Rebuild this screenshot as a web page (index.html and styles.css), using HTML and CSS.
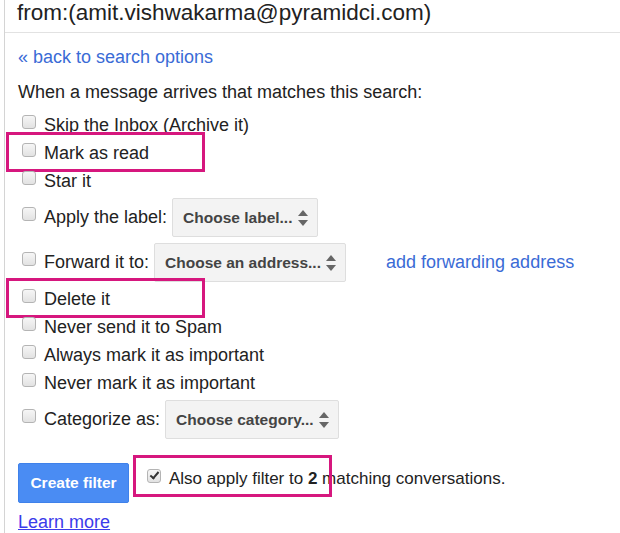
FILE: index.html
```html
<!DOCTYPE html>
<html lang="en">
<head>
    <meta charset="UTF-8">
    <title>Create filter</title>
    <link rel="stylesheet" href="styles.css">
</head>
<body>
<div class="panel">
    <div class="query">from:(amit.vishwakarma@pyramidci.com)</div>
    <div class="form">
        <a class="back" href="#">&laquo; back to search options</a>
        <p class="intro">When a message arrives that matches this search:</p>

        <label class="row"><span class="box"></span>Skip the Inbox (Archive it)</label>
        <label class="row marked"><span class="box"></span>Mark as read</label>
        <label class="row"><span class="box"></span>Star it</label>
        <label class="row tall"><span class="box"></span>Apply the label:
            <span class="picker label-picker">Choose label...<span class="arrows"></span></span>
        </label>
        <div class="row tall fwd-row"><span class="box"></span>Forward it to:
            <span class="picker addr-picker">Choose an address...<span class="arrows"></span></span>
            <a class="fwd" href="#">add forwarding address</a>
        </div>
        <label class="row marked"><span class="box"></span>Delete it</label>
        <label class="row"><span class="box"></span>Never send it to Spam</label>
        <label class="row"><span class="box"></span>Always mark it as important</label>
        <label class="row"><span class="box"></span>Never mark it as important</label>
        <label class="row tall"><span class="box"></span>Categorize as:
            <span class="picker cat-picker">Choose category...<span class="arrows"></span></span>
        </label>

        <div class="actions">
            <button class="create">Create filter</button>
            <label class="also"><span class="box checked"></span><span>Also apply filter to <b>2</b> matching conversations.</span></label>
        </div>
        <a class="learn" href="#">Learn more</a>
    </div>
</div>
</body>
</html>
```

FILE: styles.css
```css
*,*::before,*::after{
    margin: 0;
    padding: 0;
    box-sizing: border-box;
}
html,body{
    width: 100%;
    height: 100%;
    overflow: hidden;
}
body{
    background: #fff;
    font-family: "Liberation Sans", Arial, sans-serif;
    color: #222;
}
.panel{
    margin-left: 4px;
    border-left: 1px solid #d4d4d4;
    height: 100%;
}
.query{
    font-size: 22.5px;
    line-height: 26px;
    padding: 0 0 6px 12px;
    border-bottom: 1px solid #e2e2e2;
}
.form{
    padding: 13px 0 0 13px;
    font-size: 18px;
}
a{
    text-decoration: none;
}
.back{
    display: block;
    color: #3a6bd6;
    line-height: 22px;
}
.intro{
    margin: 13px 0 8px;
    line-height: 22px;
}
.row{
    position: relative;
    display: flex;
    align-items: center;
    height: 28px;
    padding-left: 4px;
}
.row.tall{
    height: 39px;
    margin: 3px 0;
}
.row.fwd-row{
    margin-top: 6px;
}
.box{
    width: 14px;
    height: 14px;
    margin: 0 8px 7px 0;
    border: 1px solid #b4b4b4;
    border-radius: 3px;
    background: linear-gradient(#f6f6f6, #e2e2e2);
    flex: none;
    position: relative;
}
.box.checked::after{
    content: "";
    position: absolute;
    left: 4px;
    top: 0px;
    width: 5px;
    height: 9px;
    border: solid #333;
    border-width: 0 2.5px 2.5px 0;
    transform: rotate(40deg);
}
.picker{
    display: flex;
    align-items: center;
    height: 39px;
    margin-left: 5px;
    padding: 0 9px 0 10px;
    background: #f3f3f3;
    border: 1px solid #dedede;
    border-radius: 2px;
    font-size: 15.5px;
    font-weight: bold;
    color: #444;
}
.label-picker{
    width: 146px;
}
.addr-picker{
    width: 192px;
}
.cat-picker{
    width: 174px;
}
.arrows{
    margin-left: auto;
    width: 10px;
    height: 16px;
    position: relative;
    flex: none;
}
.arrows::before,.arrows::after{
    content: "";
    position: absolute;
    left: 0;
    border-left: 5px solid transparent;
    border-right: 5px solid transparent;
}
.arrows::before{
    top: 0;
    border-bottom: 6px solid #666;
}
.arrows::after{
    bottom: 0;
    border-top: 6px solid #666;
}
.fwd{
    margin-left: 40px;
    color: #3a6bd6;
}
.marked::after,.also::after{
    content: "";
    position: absolute;
    border: 3px solid #d6177e;
    pointer-events: none;
}
.marked::after{
    left: -12px;
    top: -7px;
    width: 199px;
    height: 40px;
}
.actions{
    display: flex;
    align-items: center;
    margin-top: 24px;
}
.create{
    width: 111px;
    height: 40px;
    background: #4a8cf3;
    border: 1px solid #3f81ea;
    border-radius: 2px;
    color: #fff;
    font-family: "Liberation Sans", Arial, sans-serif;
    font-size: 15.5px;
    font-weight: bold;
}
.also{
    position: relative;
    display: flex;
    align-items: center;
    margin: 0 0 8px 18px;
    font-size: 17px;
    line-height: 22px;
}
.also .box{
    margin: 0 8px 6px 0;
}
.also::after{
    left: -14px;
    top: -13px;
    width: 199px;
    height: 42px;
}
.learn{
    display: block;
    margin-top: 8px;
    color: #3b3bea;
    text-decoration: underline;
    line-height: 22px;
    width: max-content;
}
```
